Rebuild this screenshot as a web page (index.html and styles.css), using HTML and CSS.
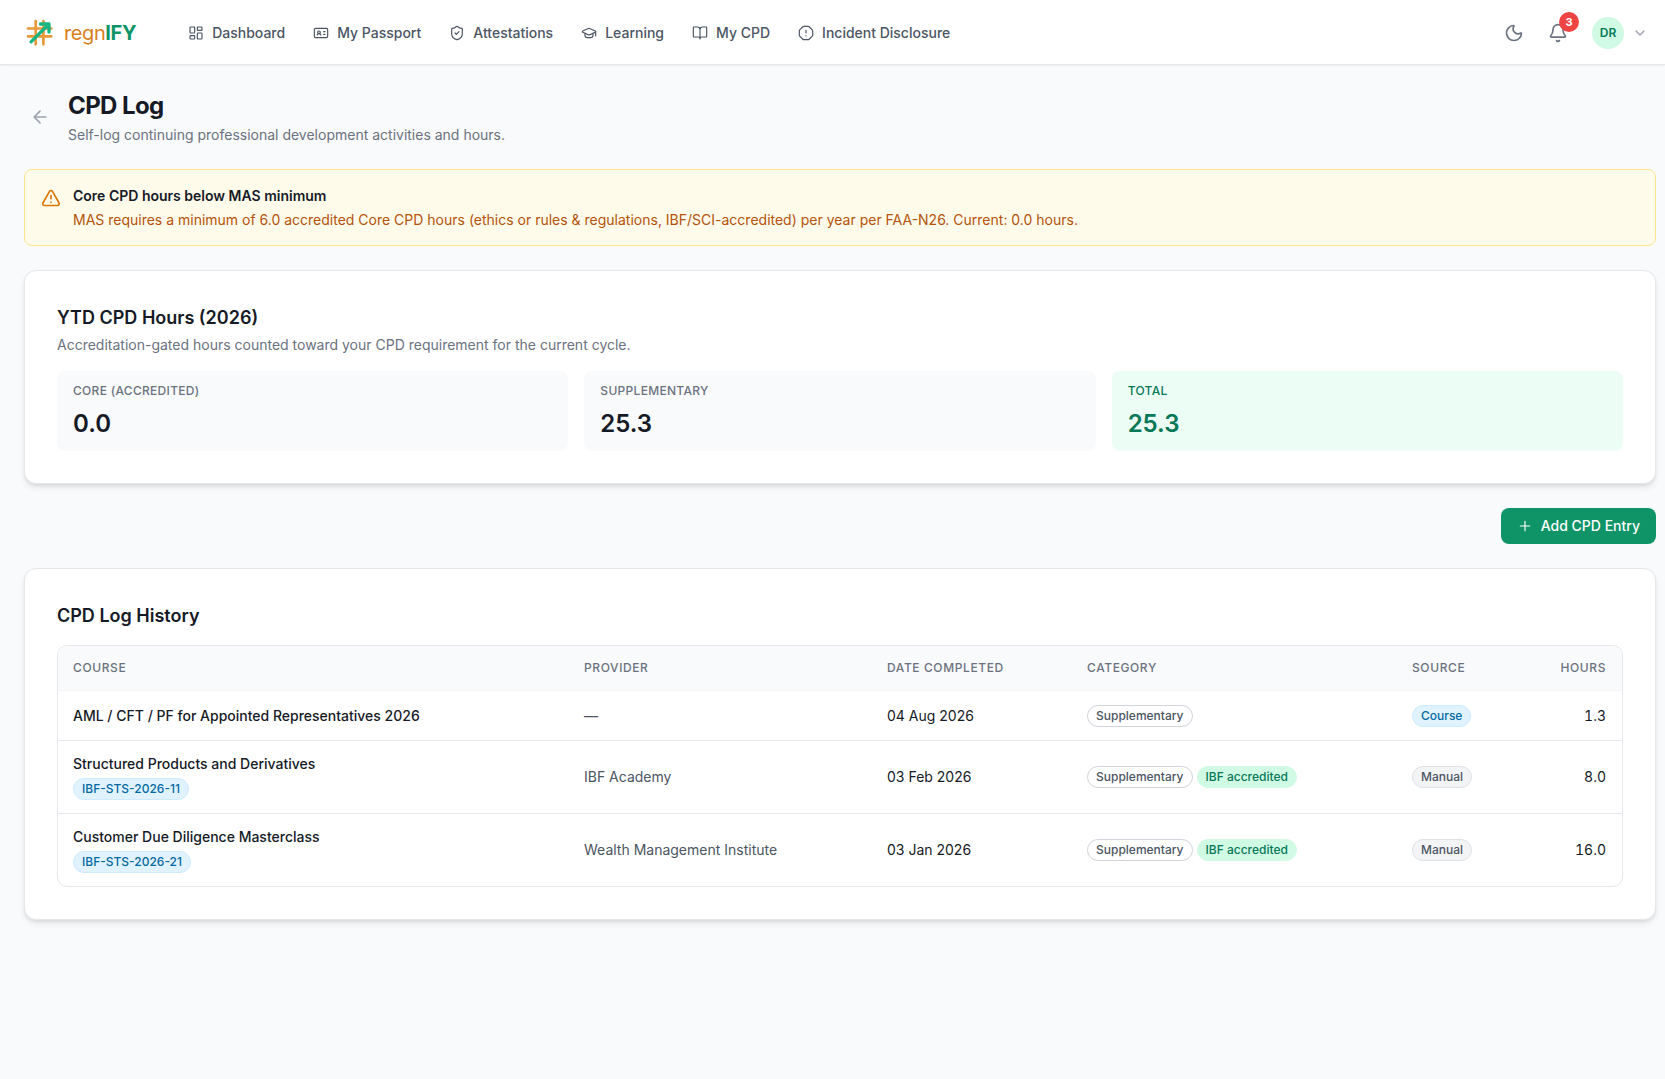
FILE: index.html
```html
<!DOCTYPE html>
<html lang="en">
<head>
    <meta charset="UTF-8">
    <meta name="viewport" content="width=device-width, initial-scale=1.0">
    <title>CPD Log - regnIFY</title>
    <link rel="stylesheet" href="styles.css">
</head>
<body>
    <header class="topbar">
        <a class="brand" href="#">
            <svg class="brand-mark" viewBox="0 0 32 32" fill="none" stroke-linecap="round" stroke-linejoin="round">
                <g stroke="#e8993a" stroke-width="2.7">
                    <path d="M11.700 4v23.300M19.400 4v23.300M4 11.500h23.300M4 19.300h23.300"/>
                </g>
                <path d="M7 24.800 24 8M16.500 7H25v8" stroke="#17b583" stroke-width="3.300"/>
            </svg>
            <span class="brand-name">regn<b>IFY</b></span>
        </a>

        <nav class="nav">
            <a href="#">
                <svg class="icon" viewBox="0 0 24 24"><rect x="3" y="3" width="7" height="9" rx="1"/><rect x="14" y="3" width="7" height="5" rx="1"/><rect x="14" y="12" width="7" height="9" rx="1"/><rect x="3" y="16" width="7" height="5" rx="1"/></svg>
                Dashboard
            </a>
            <a href="#">
                <svg class="icon" viewBox="0 0 24 24"><path d="M16 10h2M16 14h2M6.170 15a3 3 0 0 1 5.660 0"/><circle cx="9" cy="11" r="2"/><rect x="2" y="5" width="20" height="14" rx="2"/></svg>
                My Passport
            </a>
            <a href="#">
                <svg class="icon" viewBox="0 0 24 24"><path d="M20 13c0 5-3.500 7.500-7.660 8.950a1 1 0 0 1-.67-.01C7.500 20.500 4 18 4 13V6a1 1 0 0 1 1-1c2 0 4.500-1.200 6.240-2.720a1.170 1.170 0 0 1 1.520 0C14.510 3.810 17 5 19 5a1 1 0 0 1 1 1z"/><path d="m9 12 2 2 4-4"/></svg>
                Attestations
            </a>
            <a href="#">
                <svg class="icon" viewBox="0 0 24 24"><path d="M21.420 10.922a1 1 0 0 0-.019-1.838L12.830 5.180a2 2 0 0 0-1.660 0L2.600 9.080a1 1 0 0 0 0 1.832l8.570 3.908a2 2 0 0 0 1.660 0z"/><path d="M22 10v6M6 12.500V16a6 3 0 0 0 12 0v-3.500"/></svg>
                Learning
            </a>
            <a href="#">
                <svg class="icon" viewBox="0 0 24 24"><path d="M12 7v14M3 18a1 1 0 0 1-1-1V4a1 1 0 0 1 1-1h5a4 4 0 0 1 4 4 4 4 0 0 1 4-4h5a1 1 0 0 1 1 1v13a1 1 0 0 1-1 1h-6a3 3 0 0 0-3 3 3 3 0 0 0-3-3z"/></svg>
                My CPD
            </a>
            <a href="#">
                <svg class="icon" viewBox="0 0 24 24"><path d="M12 16h.01M12 8v4M15.312 2a2 2 0 0 1 1.414.586l4.688 4.688A2 2 0 0 1 22 8.688v6.624a2 2 0 0 1-.586 1.414l-4.688 4.688a2 2 0 0 1-1.414.586H8.688a2 2 0 0 1-1.414-.586l-4.688-4.688A2 2 0 0 1 2 15.312V8.688a2 2 0 0 1 .586-1.414l4.688-4.688A2 2 0 0 1 8.688 2z"/></svg>
                Incident Disclosure
            </a>
        </nav>

        <div class="tools">
            <button class="icon-btn" type="button" aria-label="Toggle dark mode">
                <svg class="icon icon-lg" viewBox="0 0 24 24"><path d="M20.985 12.486a9 9 0 1 1-9.473-9.472c.405-.022.617.460.402.803a6 6 0 0 0 8.268 8.268c.344-.215.825-.004.803.401"/></svg>
            </button>
            <button class="icon-btn" type="button" aria-label="Notifications">
                <svg class="icon icon-lg" viewBox="0 0 24 24"><path d="M10.268 21a2 2 0 0 0 3.464 0M3.262 15.326A1 1 0 0 0 4 17h16a1 1 0 0 0 .740-1.673C19.410 13.956 18 12.499 18 8A6 6 0 0 0 6 8c0 4.499-1.411 5.956-2.738 7.326"/></svg>
                <span class="count">3</span>
            </button>
            <button class="user" type="button" aria-label="Account menu">
                <span class="avatar">DR</span>
                <svg class="icon chevron" viewBox="0 0 24 24"><path d="m6 9 6 6 6-6"/></svg>
            </button>
        </div>
    </header>

    <main class="page">
        <div class="page-head">
            <a class="back" href="#" aria-label="Back">
                <svg class="icon icon-lg" viewBox="0 0 24 24"><path d="m12 19-7-7 7-7M19 12H5"/></svg>
            </a>
            <div>
                <h1>CPD Log</h1>
                <p class="muted">Self-log continuing professional development activities and hours.</p>
            </div>
        </div>

        <div class="alert" role="alert">
            <svg class="icon icon-lg" viewBox="0 0 24 24"><path d="m21.730 18-8-14a2 2 0 0 0-3.480 0l-8 14A2 2 0 0 0 4 21h16a2 2 0 0 0 1.730-3M12 9v4M12 17h.01"/></svg>
            <div>
                <p class="alert-title">Core CPD hours below MAS minimum</p>
                <p class="alert-text">MAS requires a minimum of 6.0 accredited Core CPD hours (ethics or rules &amp; regulations, IBF/SCI-accredited) per year per FAA-N26. Current: 0.0 hours.</p>
            </div>
        </div>

        <section class="card">
            <h2>YTD CPD Hours (2026)</h2>
            <p class="muted">Accreditation-gated hours counted toward your CPD requirement for the current cycle.</p>
            <div class="stats">
                <div class="stat">
                    <p class="stat-label">Core (accredited)</p>
                    <p class="stat-value">0.0</p>
                </div>
                <div class="stat">
                    <p class="stat-label">Supplementary</p>
                    <p class="stat-value">25.3</p>
                </div>
                <div class="stat stat-total">
                    <p class="stat-label">Total</p>
                    <p class="stat-value">25.3</p>
                </div>
            </div>
        </section>

        <div class="actions">
            <button class="btn" type="button">
                <svg class="icon" viewBox="0 0 24 24"><path d="M5 12h14M12 5v14"/></svg>
                Add CPD Entry
            </button>
        </div>

        <section class="card">
            <h2>CPD Log History</h2>
            <div class="table-wrap">
                <table>
                    <colgroup>
                        <col class="col-course">
                        <col class="col-provider">
                        <col class="col-date">
                        <col class="col-category">
                        <col class="col-source">
                        <col class="col-hours">
                    </colgroup>
                    <thead>
                        <tr>
                            <th>Course</th>
                            <th>Provider</th>
                            <th>Date completed</th>
                            <th>Category</th>
                            <th>Source</th>
                            <th class="num">Hours</th>
                        </tr>
                    </thead>
                    <tbody>
                        <tr>
                            <td class="course">AML / CFT / PF for Appointed Representatives 2026</td>
                            <td class="provider">—</td>
                            <td>04 Aug 2026</td>
                            <td><div class="tags"><span class="tag">Supplementary</span></div></td>
                            <td><div class="tags"><span class="tag tag-blue">Course</span></div></td>
                            <td class="num">1.3</td>
                        </tr>
                        <tr>
                            <td class="course">Structured Products and Derivatives<div class="tags"><span class="tag tag-blue">IBF-STS-2026-11</span></div></td>
                            <td class="provider">IBF Academy</td>
                            <td>03 Feb 2026</td>
                            <td><div class="tags"><span class="tag">Supplementary</span><span class="tag tag-green">IBF accredited</span></div></td>
                            <td><div class="tags"><span class="tag tag-gray">Manual</span></div></td>
                            <td class="num">8.0</td>
                        </tr>
                        <tr>
                            <td class="course">Customer Due Diligence Masterclass<div class="tags"><span class="tag tag-blue">IBF-STS-2026-21</span></div></td>
                            <td class="provider">Wealth Management Institute</td>
                            <td>03 Jan 2026</td>
                            <td><div class="tags"><span class="tag">Supplementary</span><span class="tag tag-green">IBF accredited</span></div></td>
                            <td><div class="tags"><span class="tag tag-gray">Manual</span></div></td>
                            <td class="num">16.0</td>
                        </tr>
                    </tbody>
                </table>
            </div>
        </section>
    </main>
</body>
</html>
```
FILE: styles.css
```css
* {
    box-sizing: border-box;
}

body {
    margin: 0;
    background-color: #f9fafb;
    font-family: Inter, "Liberation Sans", sans-serif;
    font-size: 14px;
    line-height: 20px;
    color: #151a26;
}

h1, h2, p {
    margin: 0;
}

a {
    color: inherit;
    text-decoration: none;
}

button {
    font: inherit;
    border: none;
    cursor: pointer;
}

.icon {
    width: 16px;
    height: 16px;
    flex-shrink: 0;
    fill: none;
    stroke: currentColor;
    stroke-width: 2;
    stroke-linecap: round;
    stroke-linejoin: round;
}

.icon-lg {
    width: 20px;
    height: 20px;
}

/* top bar */
.topbar {
    display: flex;
    align-items: center;
    height: 65px;
    padding: 0 17px 0 24px;
    background-color: #fff;
    box-shadow: inset 0 -1px 0 #e5e7eb, 0 1px 2px rgba(0, 0, 0, 0.05);
}

.brand {
    display: flex;
    align-items: center;
    gap: 8px;
    margin-right: 40px;
}

.brand-mark {
    width: 32px;
    height: 32px;
}

.brand-name {
    font-size: 20px;
    line-height: 28px;
    letter-spacing: -0.4px;
    color: #d97f1e;
}

.brand-name b {
    font-weight: 700;
    color: #0e9467;
}

.nav {
    display: flex;
    gap: 4px;
}

.nav a {
    display: flex;
    align-items: center;
    gap: 8px;
    padding: 8px 12px;
    font-weight: 500;
    color: #4b5563;
}

.nav .icon {
    stroke-width: 1.75;
}

.tools {
    display: flex;
    align-items: center;
    gap: 8px;
    margin-left: auto;
}

.icon-btn {
    position: relative;
    display: flex;
    padding: 8px;
    background: none;
    color: #6b7280;
}

.count {
    position: absolute;
    top: -3px;
    right: -3px;
    width: 20px;
    height: 20px;
    border-radius: 50%;
    background-color: #ef4444;
    color: #fff;
    font-size: 11px;
    font-weight: 700;
}

.user {
    display: flex;
    align-items: center;
    gap: 8px;
    padding: 0 0 0 8px;
    background: none;
}

.avatar {
    width: 32px;
    height: 32px;
    border-radius: 50%;
    background-color: #d1fae5;
    color: #047857;
    font-size: 12px;
    font-weight: 600;
    line-height: 32px;
}

.chevron {
    color: #9ca3af;
}

/* page */
.page {
    display: flex;
    flex-direction: column;
    gap: 24px;
    padding: 24px 9px 24px 24px;
}

.page-head {
    display: flex;
    align-items: center;
    gap: 12px;
}

.back {
    display: flex;
    padding: 6px;
    color: #9ca3af;
}

h1 {
    font-size: 24px;
    font-weight: 700;
    line-height: 34px;
    letter-spacing: -0.6px;
}

.muted {
    margin-top: 2px;
    color: #6b7280;
}

.alert {
    display: flex;
    gap: 12px;
    padding: 16px 16px 15px;
    border: 1px solid #fde68a;
    border-radius: 8px;
    background-color: #fffbeb;
}

.alert .icon {
    margin-top: 2px;
    color: #d97706;
}

.alert-title {
    font-weight: 600;
}

.alert-text {
    margin-top: 4px;
    color: #b45309;
}

.card {
    padding: 32px;
    border: 1px solid #e5e7eb;
    border-radius: 12px;
    background-color: #fff;
    box-shadow: 0 4px 6px -1px rgba(0, 0, 0, 0.1), 0 2px 4px -2px rgba(0, 0, 0, 0.1);
}

h2 {
    font-size: 18px;
    font-weight: 600;
    line-height: 30px;
}

.stats {
    display: grid;
    grid-template-columns: repeat(3, 1fr);
    gap: 16px;
    margin-top: 16px;
}

.stat {
    padding: 12px 16px 10px;
    border-radius: 8px;
    background-color: #f9fafb;
}

.stat-label {
    font-size: 12px;
    font-weight: 500;
    line-height: 16px;
    letter-spacing: 0.3px;
    text-transform: uppercase;
    color: #6b7280;
}

.stat-value {
    margin-top: 8px;
    font-size: 24px;
    font-weight: 600;
    line-height: 34px;
}

.stat-total {
    background-color: #ecfdf5;
}

.stat-total p {
    color: #047857;
}

.actions {
    display: flex;
    justify-content: flex-end;
}

.btn {
    display: flex;
    align-items: center;
    gap: 8px;
    padding: 8px 16px;
    border-radius: 8px;
    background-color: #0e9467;
    color: #fff;
    font-weight: 500;
}

.btn .icon {
    stroke-width: 1.75;
}

/* history table */
.table-wrap {
    margin-top: 14px;
    overflow: hidden;
    border: 1px solid #e5e7eb;
    border-radius: 10px;
}

table {
    width: 100%;
    border-collapse: collapse;
    table-layout: fixed;
}

.col-provider {
    width: 303px;
}

.col-date {
    width: 200px;
}

.col-category {
    width: 325px;
}

.col-source {
    width: 121px;
}

.col-hours {
    width: 105px;
}

th {
    padding: 12px 16px;
    background-color: #f9fafb;
    color: #6b7280;
    font-size: 12px;
    font-weight: 500;
    letter-spacing: 0.6px;
    text-align: left;
    text-transform: uppercase;
}

td {
    height: 50px;
    padding: 13px 16px;
    border-top: 1px solid #e5e7eb;
}

tbody tr:first-child td {
    border-top-color: #f3f4f6;
}

.num {
    text-align: right;
    font-variant-numeric: tabular-nums;
}

.course {
    font-weight: 500;
}

th:first-child,
.course {
    padding-left: 15px;
}

.course .tags {
    margin-top: 4px;
}

.provider {
    color: #4b5563;
}

.tags {
    display: flex;
    gap: 4px;
}

.tag {
    padding: 2px 8px;
    border: 1px solid #d1d5db;
    border-radius: 11px;
    color: #4b5563;
    font-size: 12px;
    font-weight: 500;
    line-height: 16px;
}

.tag-blue {
    border-color: #cdebfc;
    background-color: #e0f2fe;
    color: #0369a1;
}

.tag-green {
    border-color: #d1fae5;
    background-color: #d1fae5;
    color: #047857;
}

.tag-gray {
    border-color: #dfe1e5;
    background-color: #f3f4f6;
}
```
